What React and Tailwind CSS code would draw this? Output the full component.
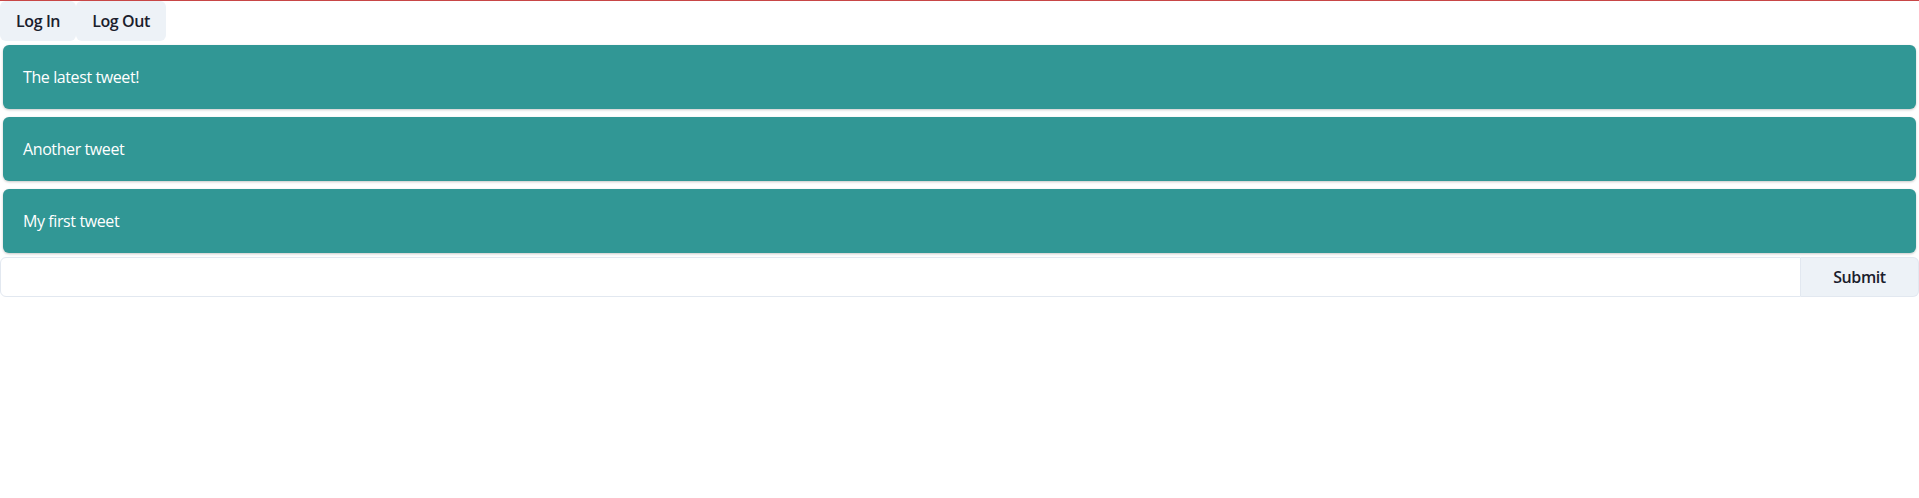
export default function App() {
  const tweets = ["The latest tweet!", "Another tweet", "My first tweet"];
  return (
    <div className="w-[1919px] min-h-[498px] bg-white border-t border-[#c84646] text-[#1a202c] font-['Segoe_UI','Open_Sans',sans-serif] text-base tracking-[-0.4px]">
      <div className="flex">
        <button className="h-10 px-4 rounded-md bg-[#edf2f7] font-semibold text-base leading-none tracking-[-0.4px]">Log In</button>
        <button className="h-10 px-4 rounded-md bg-[#edf2f7] font-semibold text-base leading-none tracking-[-0.4px]">Log Out</button>
      </div>
      <div className="flex flex-col mx-[-1px]">
        {tweets.map((t) => (
          <div key={t} className="m-1 p-5 rounded-md bg-[#319795] text-white leading-6 shadow-[0_1px_3px_rgba(0,0,0,0.15),0_1px_2px_rgba(0,0,0,0.08)]">
            {t}
          </div>
        ))}
      </div>
      <div className="flex h-10">
        <input className="flex-1 h-10 border border-[#e2e8f0] rounded-l-md px-4 outline-none" />
        <button className="h-10 w-[118px] border border-l-0 border-[#e2e8f0] rounded-r-md bg-[#edf2f7] font-semibold tracking-[-0.4px]">Submit</button>
      </div>
    </div>
  );
}
